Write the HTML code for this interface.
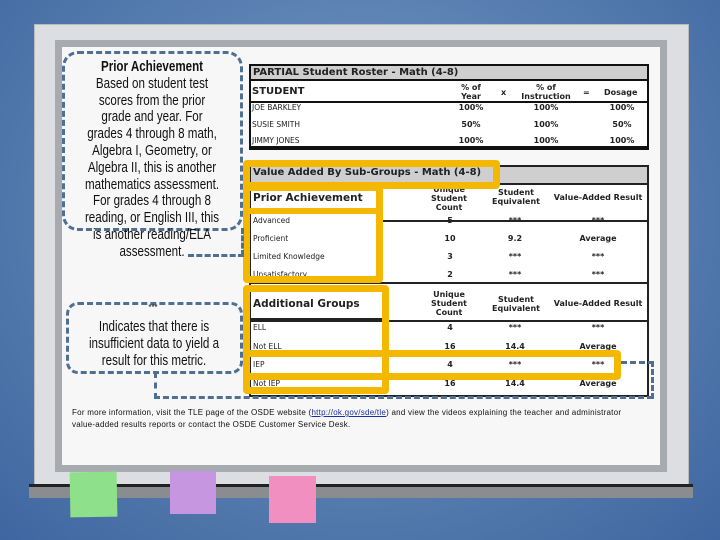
<!DOCTYPE html><html><head><style>
*{margin:0;padding:0;box-sizing:border-box}
body{width:720px;height:540px;overflow:hidden;position:relative;background:radial-gradient(ellipse at 50% 40%,#7d9cc4 0%,#5a80b2 50%,#3f66a0 100%);font-family:"Liberation Sans",sans-serif}
.a{position:absolute}
.t{font-family:"DejaVu Sans",sans-serif;font-weight:bold;font-size:8px;color:#222}
.y{position:absolute;border:7px solid #f5b800;border-radius:4px}
.d{position:absolute;border:3px dashed #4f6f93}
.n{position:absolute;width:220px;text-align:center;font-size:14.5px;color:#111;transform:scaleX(0.8);transform-origin:50% 0;white-space:nowrap}
</style></head><body>
<div class="a" style="left:34px;top:24px;width:655px;height:462px;background:#dcdee1;border:1px solid #bbb"></div>
<div class="a" style="left:55px;top:40px;width:612px;height:432px;background:#a7abb0"></div>
<div class="a" style="left:62px;top:47px;width:598px;height:418px;background:#f7f7f8"></div>
<div class="a" style="left:29px;top:484px;width:664px;height:3px;background:#222"></div>
<div class="a" style="left:29px;top:487px;width:664px;height:11px;background:#8a8c8f"></div>

<!-- table 1 -->
<div class="a" style="left:249px;top:64px;width:400px;height:86px;border:2px solid #111;border-bottom-width:4px;background:#fff"></div>
<div class="a t" style="left:251px;top:66px;width:396px;height:15px;background:#cfcfcf;border-bottom:2px solid #111;font-size:10px;padding-left:2px;line-height:14px">PARTIAL Student Roster - Math (4-8)</div>
<div class="a" style="left:251px;top:101px;width:396px;height:2px;background:#111"></div>
<div class="a t" style="left:252px;top:86px;font-size:10px">STUDENT</div>
<div class="a t" style="left:455px;top:83px;text-align:center;width:32px;line-height:9px">% of<br>Year</div>
<div class="a t" style="left:501px;top:88px">x</div>
<div class="a t" style="left:515px;top:83px;text-align:center;width:62px;line-height:9px">% of<br>Instruction</div>
<div class="a t" style="left:583px;top:88px">=</div>
<div class="a t" style="left:604px;top:88px">Dosage</div>
<div class="a t" style="left:252px;top:100px;font-weight:normal;font-size:7.5px;line-height:16.5px">JOE BARKLEY<br>SUSIE SMITH<br>JIMMY JONES</div>
<div class="a t" style="left:450px;top:100px;width:42px;text-align:center;line-height:16.5px">100%<br>50%<br>100%</div>
<div class="a t" style="left:525px;top:100px;width:42px;text-align:center;line-height:16.5px">100%<br>100%<br>100%</div>
<div class="a t" style="left:601px;top:100px;width:42px;text-align:center;line-height:16.5px">100%<br>50%<br>100%</div>

<!-- table 2 -->
<div class="a" style="left:249px;top:165px;width:400px;height:232px;border:2px solid #222;background:#fff"></div>
<div class="a" style="left:251px;top:167px;width:396px;height:18px;background:#cfcfcf;border-bottom:2px solid #222"></div>
<div class="a" style="left:380px;top:220px;width:267px;height:2px;background:#222"></div>
<div class="a" style="left:251px;top:282px;width:396px;height:2px;background:#222"></div>
<div class="a" style="left:380px;top:320px;width:267px;height:2px;background:#222"></div>
<div class="a t" style="left:419px;top:185px;width:60px;text-align:center;line-height:9px">Unique<br>Student<br>Count</div>
<div class="a t" style="left:485px;top:188px;width:62px;text-align:center;line-height:9px">Student<br>Equivalent</div>
<div class="a t" style="left:550px;top:193px;width:96px;text-align:center">Value-Added Result</div>
<div class="a t" style="left:419px;top:290px;width:60px;text-align:center;line-height:9px">Unique<br>Student<br>Count</div>
<div class="a t" style="left:485px;top:295px;width:62px;text-align:center;line-height:9px">Student<br>Equivalent</div>
<div class="a t" style="left:550px;top:299px;width:96px;text-align:center">Value-Added Result</div>
<div class="a t" style="left:430px;top:212px;width:40px;text-align:center;line-height:18px">5<br>10<br>3<br>2</div>
<div class="a t" style="left:495px;top:212px;width:40px;text-align:center;line-height:18px">***<br>9.2<br>***<br>***</div>
<div class="a t" style="left:568px;top:212px;width:60px;text-align:center;line-height:18px">***<br>Average<br>***<br>***</div>
<div class="a t" style="left:430px;top:319px;width:40px;text-align:center;line-height:18.5px">4<br>16<br>4<br>16</div>
<div class="a t" style="left:495px;top:319px;width:40px;text-align:center;line-height:18.5px">***<br>14.4<br>***<br>14.4</div>
<div class="a t" style="left:568px;top:319px;width:60px;text-align:center;line-height:18.5px">***<br>Average<br>***<br>Average</div>
<div class="a t" style="left:253px;top:212px;font-weight:normal;font-size:7.5px;line-height:18px">Advanced<br>Proficient<br>Limited Knowledge<br>Unsatisfactory</div>
<div class="a t" style="left:253px;top:319px;font-weight:normal;font-size:7.5px;line-height:18.5px">ELL<br>Not ELL<br>IEP<br>Not IEP</div>

<div class="y" style="left:243px;top:160px;width:257px;height:29px"></div>
<div class="a t" style="left:253px;top:167px;font-size:10px">Value Added By Sub-Groups - Math (4-8)</div>
<div class="y" style="left:243px;top:184px;width:140px;height:99px"></div>
<div class="a" style="left:250px;top:208px;width:126px;height:6px;background:#f5b800"></div>
<div class="a t" style="left:253px;top:192px;font-size:10.5px">Prior Achievement</div>
<div class="y" style="left:243px;top:285px;width:146px;height:109px"></div>
<div class="a" style="left:250px;top:318px;width:132px;height:4px;background:#222"></div>
<div class="a t" style="left:253px;top:298px;font-size:10.5px">Additional Groups</div>
<div class="y" style="left:243px;top:350px;width:378px;height:30px"></div>

<!-- dashed callouts -->
<div class="d" style="left:62px;top:51px;width:181px;height:180px;border-radius:16px"></div>
<div class="a" style="left:188px;top:254px;width:56px;border-top:3px dashed #4f6f93"></div>
<div class="a" style="left:241px;top:228px;height:28px;border-left:3px dashed #4f6f93"></div>
<div class="n" style="left:42px;top:59px;line-height:16.8px"><b>Prior Achievement</b><br>Based on student test<br>scores from the prior<br>grade and year. For<br>grades 4 through 8 math,<br>Algebra I, Geometry, or<br>Algebra II, this is another<br>mathematics assessment.<br>For grades 4 through 8<br>reading, or English III, this<br>is another reading/ELA<br>assessment.</div>
<div class="d" style="left:66px;top:302px;width:177px;height:72px;border-radius:12px"></div>
<div class="a" style="left:70px;top:303px;width:166px;text-align:center;font-size:8px;color:#111">***</div>
<div class="n" style="left:44px;top:319px;line-height:17px">Indicates that there is<br>insufficient data to yield a<br>result for this metric.</div>
<div class="a" style="left:154px;top:372px;width:499px;height:27px;border:3px dashed #4f6f93;border-top:none;border-right:none"></div>
<div class="a" style="left:621px;top:361px;width:33px;height:38px;border-top:3px dashed #4f6f93;border-right:3px dashed #4f6f93"></div>

<div class="a" style="left:72px;top:407px;font-size:8px;line-height:12px;color:#111;letter-spacing:0.25px;white-space:nowrap">For more information, visit the TLE page of the OSDE website (<u style="color:#1a2fa0">http://ok.gov/sde/tle</u>) and view the videos explaining the teacher and administrator<br>value-added results reports or contact the OSDE Customer Service Desk.</div>

<div class="a" style="left:70px;top:472px;width:47px;height:45px;background:#8fe08a;transform:rotate(-1deg)"></div>
<div class="a" style="left:170px;top:471px;width:46px;height:43px;background:#c796e0"></div>
<div class="a" style="left:269px;top:476px;width:47px;height:47px;background:#f08fc0"></div>
</body></html>
